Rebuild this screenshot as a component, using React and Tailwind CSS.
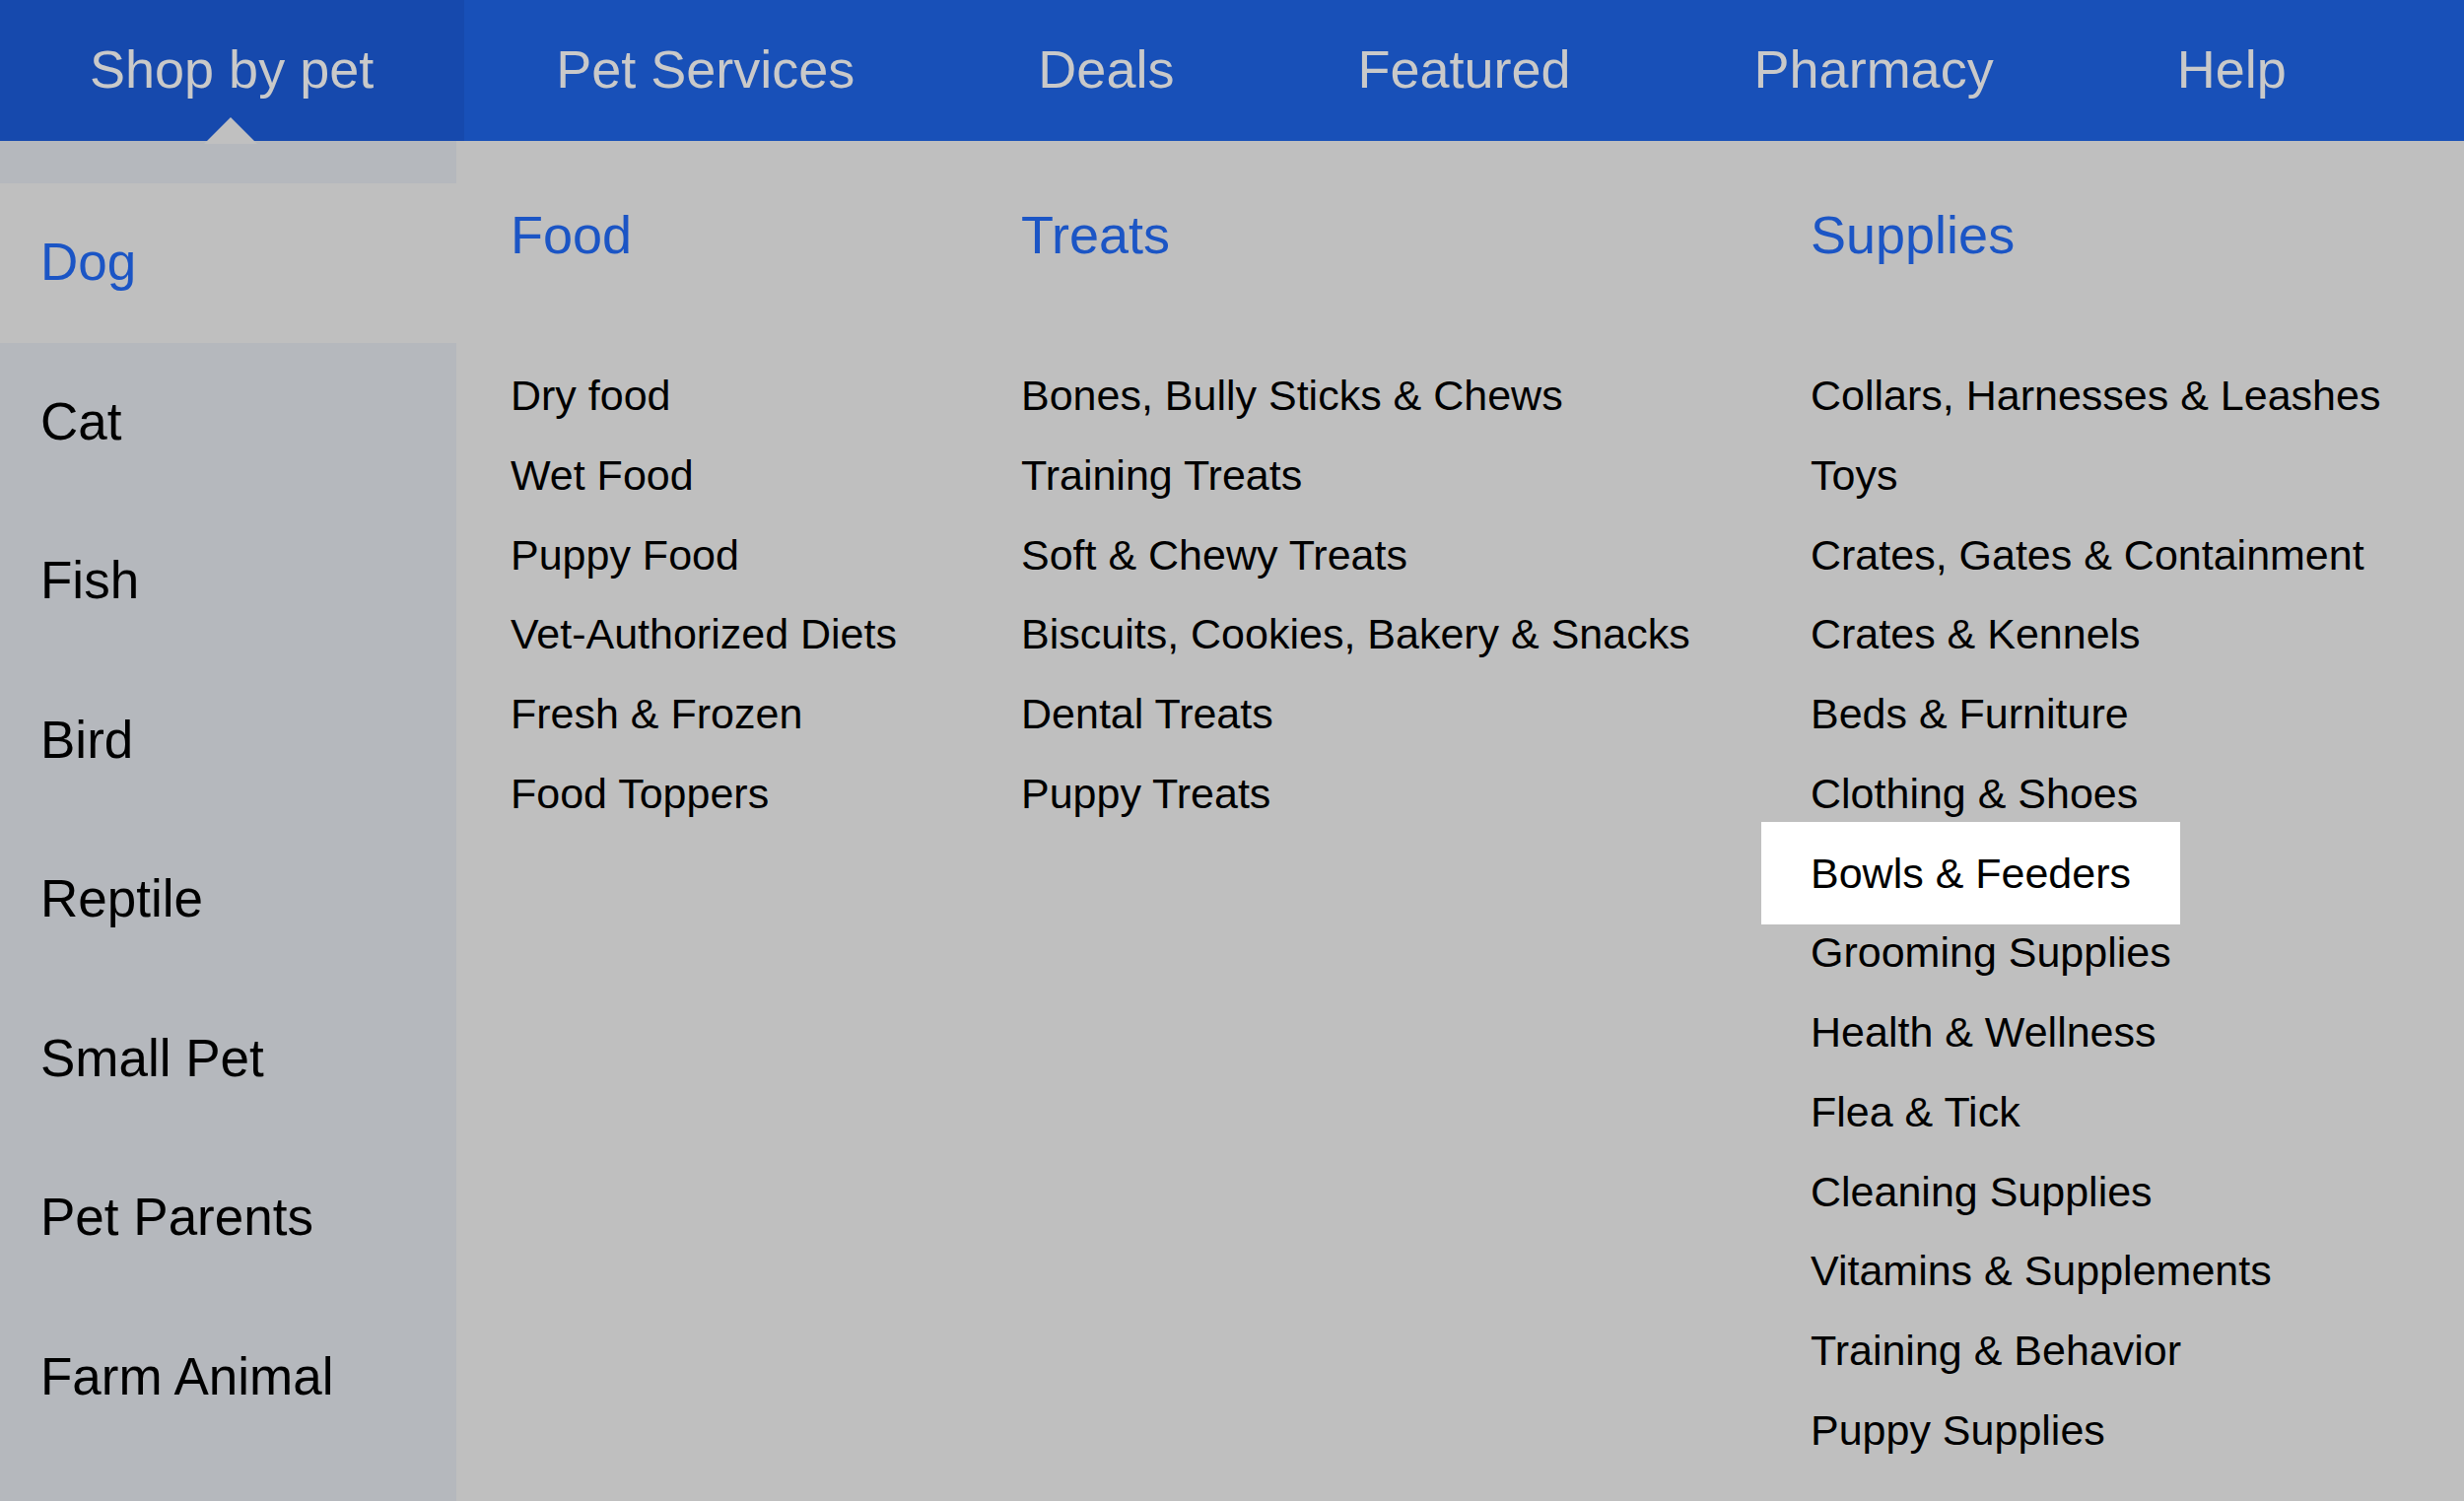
import { useState } from "react";

const font = { fontFamily: '"Liberation Sans", Arial, sans-serif' };

export default function App() {
  const [pet, setPet] = useState("Dog");
  const [hover, setHover] = useState("Bowls & Feeders");

  const tabs = ["Shop by pet", "Pet Services", "Deals", "Featured", "Pharmacy", "Help"];
  const pets = ["Dog", "Cat", "Fish", "Bird", "Reptile", "Small Pet", "Pet Parents", "Farm Animal"];
  const columns = [
    {
      title: "Food",
      items: ["Dry food", "Wet Food", "Puppy Food", "Vet-Authorized Diets", "Fresh & Frozen", "Food Toppers"],
    },
    {
      title: "Treats",
      items: [
        "Bones, Bully Sticks & Chews",
        "Training Treats",
        "Soft & Chewy Treats",
        "Biscuits, Cookies, Bakery & Snacks",
        "Dental Treats",
        "Puppy Treats",
      ],
    },
    {
      title: "Supplies",
      items: [
        "Collars, Harnesses & Leashes",
        "Toys",
        "Crates, Gates & Containment",
        "Crates & Kennels",
        "Beds & Furniture",
        "Clothing & Shoes",
        "Bowls & Feeders",
        "Grooming Supplies",
        "Health & Wellness",
        "Flea & Tick",
        "Cleaning Supplies",
        "Vitamins & Supplements",
        "Training & Behavior",
        "Puppy Supplies",
      ],
    },
  ];

  return (
    <div style={font} className="min-h-screen bg-[#bfbfbf] flex flex-col">
      {/* top nav */}
      <nav className="flex h-[143px] bg-[#1850b8] text-[#c9c9c9] text-[54px] leading-[140px]">
        {tabs.map((t, i) => (
          <div
            key={t}
            className={`relative whitespace-nowrap ${
              i === 0 ? "pl-[91px] pr-[92px] bg-[#1649ad]" : "px-[93px]"
            }`}
          >
            {t}
            {i === 0 && (
              <svg
                className="absolute -bottom-[3px] left-[207px]"
                width="54"
                height="27"
                viewBox="0 0 54 27"
              >
                <polygon points="0,27 27,0 54,27" fill="#c0c0c0" />
              </svg>
            )}
          </div>
        ))}
      </nav>

      <div className="flex flex-1">
        {/* pet list */}
        <aside className="w-[463px] shrink-0 bg-[#b5b8bd] pt-[43px]">
          {pets.map((p) => (
            <div
              key={p}
              onClick={() => setPet(p)}
              className={`h-[161.5px] leading-[160px] pl-[41px] text-[53px] cursor-pointer ${
                pet === p ? "bg-[#bfbfbf] text-[#1b55c5]" : "text-black"
              }`}
            >
              {p}
            </div>
          ))}
        </aside>

        {/* menu columns */}
        <section className="flex-1 pl-[55px] pt-[65px] grid grid-cols-[518px_801px_1fr] content-start">
          {columns.map((col) => (
            <div key={col.title}>
              <h3 className="text-[54px] leading-[60px] text-[#1b55c5]">{col.title}</h3>
              <ul className="mt-[93px] flex flex-col items-start">
                {col.items.map((it) => (
                  <li
                    key={it}
                    onMouseEnter={() => setHover(it)}
                    className={`-mx-[50px] px-[50px] py-[11.5px] -my-[11.5px] text-[43px] leading-[80.75px] whitespace-nowrap text-black ${
                      hover === it ? "bg-white" : ""
                    }`}
                  >
                    {it}
                  </li>
                ))}
              </ul>
            </div>
          ))}
        </section>
      </div>
    </div>
  );
}
